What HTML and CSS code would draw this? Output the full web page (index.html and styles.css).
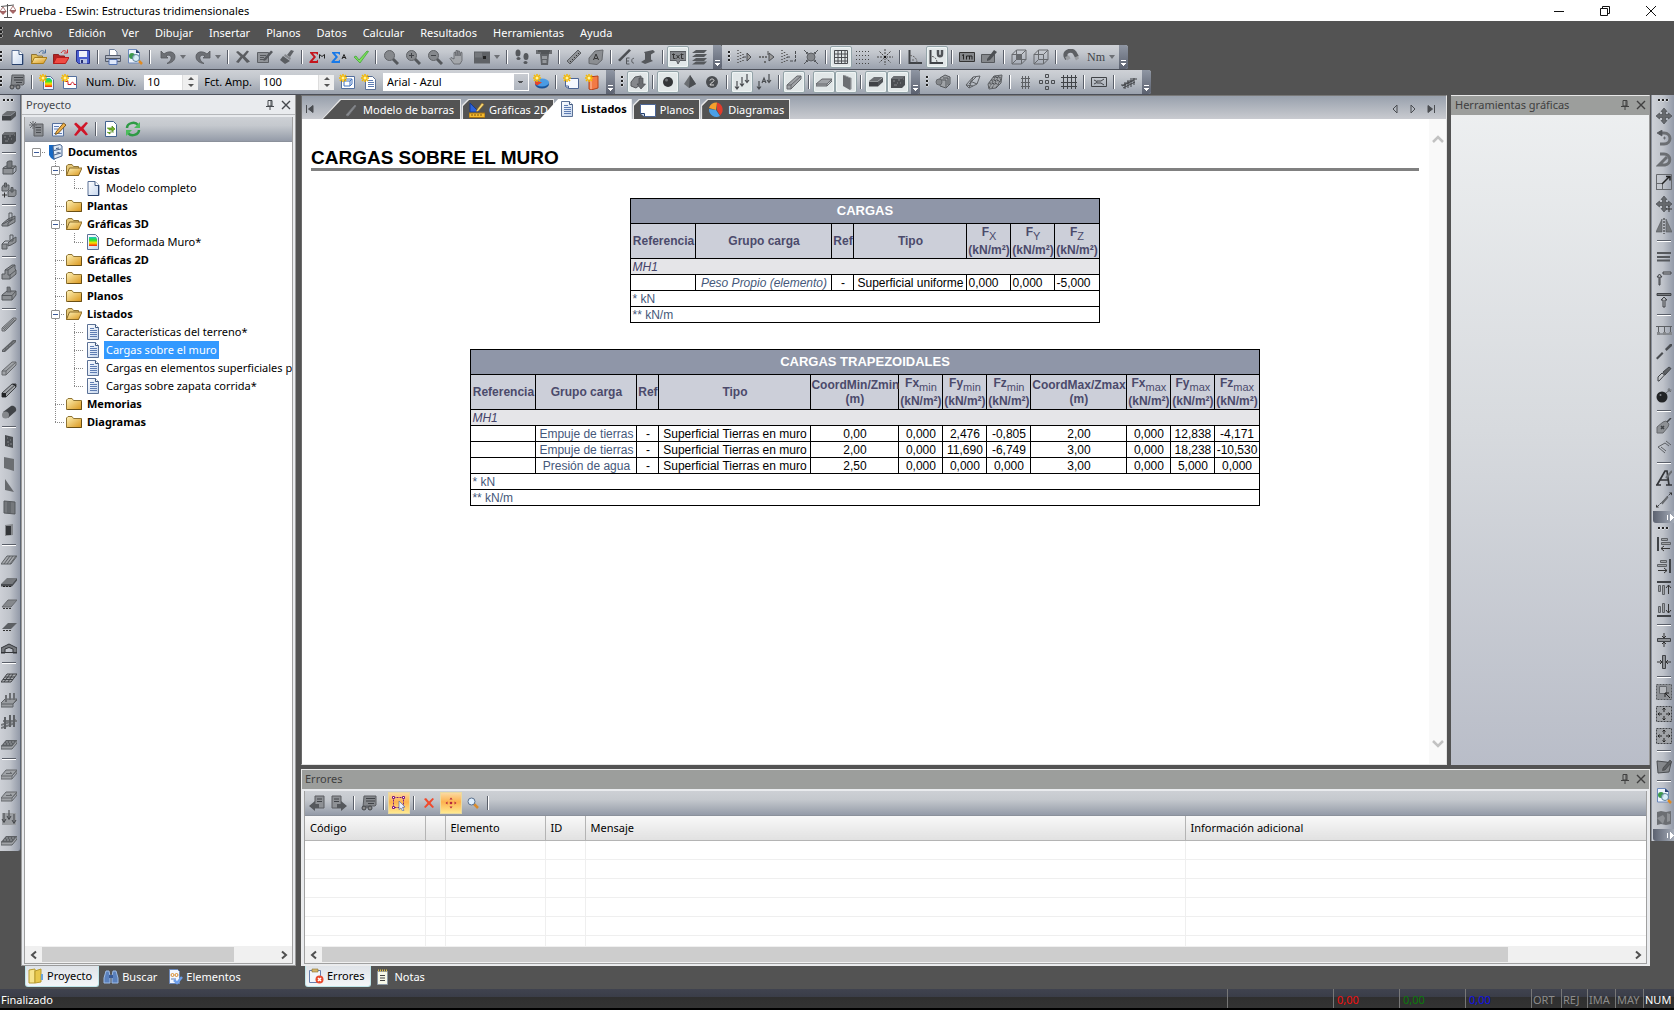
FILE: index.html
```html
<!DOCTYPE html>
<html lang="es">
<head>
<meta charset="utf-8">
<title>Prueba - ESwin: Estructuras tridimensionales</title>
<link rel="stylesheet" href="styles.css">
</head>
<body>
<svg class="sprite" aria-hidden="true">
  <defs>
    <linearGradient id="g-folder" x1="0" y1="0" x2="1" y2="1"><stop offset="0" stop-color="#fff3b8"/><stop offset="1" stop-color="#d9961c"/></linearGradient>
    <linearGradient id="g-page" x1="0" y1="0" x2="1" y2="1"><stop offset="0" stop-color="#fff"/><stop offset="1" stop-color="#c5d6ee"/></linearGradient>
    <linearGradient id="g-heat" x1="0" y1="0" x2="0" y2="1"><stop offset="0" stop-color="#19c8c0"/><stop offset=".35" stop-color="#2fe02f"/><stop offset=".65" stop-color="#ffe000"/><stop offset="1" stop-color="#f02010"/></linearGradient>
  </defs>
  <!-- documents and folders -->
  <symbol id="page" viewBox="0 0 16 16"><path d="M3 1.500h7l4 4v10H3z" fill="url(#g-page)" stroke="#5b7196"/><path d="M10 1.500v4h4" fill="#fff" stroke="#3f587f"/><path d="M13.500 5v10.500H3" fill="none" stroke="#27406b"/></symbol>
  <symbol id="textpage" viewBox="0 0 16 16"><path d="M2.500.500h8l3 3v12h-11z" fill="url(#g-page)" stroke="#5b7196"/><path d="M10.500.500v3h3" fill="#fff" stroke="#3f587f"/><path d="M5 4.500h4M5 6.500h7M5 8.500h7M5 10.500h7M5 12.500h7" stroke="#5f7db3"/></symbol>
  <symbol id="heatpage" viewBox="0 0 16 16"><path d="M2.500.500h8l3 3v12h-11z" fill="url(#g-page)" stroke="#5b7196"/><path d="M4 3h7l1 2v7H4z" fill="url(#g-heat)"/></symbol>
  <symbol id="folder" viewBox="0 0 16 16"><path d="M.500 13.500v-9.500l1.500-1.500h4l1.500 2h8v9z" fill="url(#g-folder)" stroke="#8f7434"/><path d="M1.500 13.500h14v-8" fill="none" stroke="#6b4f14"/></symbol>
  <symbol id="folderopen" viewBox="0 0 16 16"><path d="M.500 13.500v-9.500l1.500-1.500h4l1.500 2h5v9z" fill="#e6c97a" stroke="#8f7434"/><path d="M.500 13.500l3-7.500h12.500l-3.500 7.500z" fill="url(#g-folder)" stroke="#8a6a26"/></symbol>
  <symbol id="openfile" viewBox="0 0 16 16"><path d="M.500 14.500v-9h5l1 1.500h5v7.500z" fill="#e0bd58" stroke="#8f7434"/><path d="M.500 14.500l3-6h12.500l-3.500 6z" fill="url(#g-folder)" stroke="#a87d1a"/><path d="M8 4c2-3 4-3 6-.500M14.500.500v3.500h-3.500" fill="none" stroke="#4a6f9c"/></symbol>
  <symbol id="openred" viewBox="0 0 16 16"><path d="M.500 14.500v-9h5l1 1.500h5v7.500z" fill="#b52222" stroke="#8f2020"/><path d="M.500 14.500l3-6h12.500l-3.500 6z" fill="#ef4b43" stroke="#b81c1c"/><path d="M8 4c2-3 4-3 6-.500M14.500.500v3.500h-3.500" fill="none" stroke="#d02a2a"/></symbol>
  <symbol id="save" viewBox="0 0 16 16"><path d="M1.500 1.500h13v13h-11l-2-2z" fill="#4a5fd0" stroke="#262f8c"/><path d="M4 2h8v6H4z" fill="#eef1fa"/><path d="M5 10h7v4.500H5z" fill="#b9c4e4"/><path d="M6 11h2v3H6z" fill="#263075"/></symbol>
  <symbol id="print" viewBox="0 0 16 16"><path d="M4.500 6V.500h5l2.500 2.500v3" fill="#fff" stroke="#6f7f99"/><path d="M.500 6.500h15v6H.500z" fill="#b2b8c4" stroke="#565d6b"/><path d="M1 9.500h14" stroke="#4f5663"/><path d="M4 10.500h8v5H4z" fill="#dfe8fb" stroke="#5473b3"/></symbol>
  <symbol id="preview" viewBox="0 0 16 16"><path d="M1.500.500h8l3 3v10.500h-11z" fill="#eef4fd" stroke="#6c88ba"/><circle cx="5" cy="7" r="3" fill="#3c9a4c"/><path d="M9 .500v3.500h4z" fill="#24406e"/><circle cx="9" cy="9" r="3.500" fill="#d5ecf7" fill-opacity=".85" stroke="#5f8299"/><path d="M12 12l3 3" stroke="#e08a20" stroke-width="2.500"/></symbol>
  <symbol id="cabinet" viewBox="0 0 16 16"><path d="M2 1h5l2 1v12l-2 2-3-2-2-3z" fill="#1668c4"/><path d="M6 2l7-1.500 2 1.500v10l-8 3z" fill="#dfe9f5" stroke="#47648f"/><path d="M7 6.500l7-1.500M7 11l7-2" stroke="#47648f"/><path d="M9 4.500l3-.500M9.500 9l3-.500" stroke="#3f587f"/></symbol>
  <!-- editing -->
  <symbol id="undo" viewBox="0 0 16 16"><path d="M1 2v7h7L6 7c3-2 6 0 5 3-.500 2-2 3-4 4.500 5-.500 8-3 8-7C15 3 9 1 4 5z" fill="#6d7075" stroke="#55585d" stroke-width=".8"/></symbol>
  <symbol id="redo" viewBox="0 0 16 16"><path d="M15 2v7H8l2-2C7 5 4 7 5 10c.500 2 2 3 4 4.500-5-.500-8-3-8-7C1 3 7 1 12 5z" fill="#6d7075" stroke="#55585d" stroke-width=".8"/></symbol>
  <symbol id="cross" viewBox="0 0 16 16"><path d="M1 3l2-1 5 4 4-4.500 2 1-4 5 5 5-3 1.500-4.500-5-4 5-2.500-1 4.500-5.500z" fill="#5b5d61"/></symbol>
  <symbol id="redcross" viewBox="0 0 16 16"><path d="M1 3l2-1.500 5 4.500 5-5 2 1-4.500 5.500 4.500 6-2 1-5-5-5 5.500-2-1 4.500-6z" fill="#d01528"/></symbol>
  <symbol id="smallcross" viewBox="0 0 16 16"><path d="M3 4l2-1 3 3.500L11.500 3l1.500 1-3.500 4L13 12l-1.500 1L8 9.500 4.500 13 3 12l3.500-4z" fill="#f04a2c"/></symbol>
  <symbol id="edit" viewBox="0 0 16 16"><path d="M.500 3.500h11v10H.500z" fill="#909398" stroke="#5d6065"/><path d="M3 6.500h6M3 8.500h4M3 10.500h6" stroke="#55585c"/><path d="M7 9.500l7-8 2 1.500-7 8-2.500 1z" fill="#55585d"/></symbol>
  <symbol id="brush" viewBox="0 0 16 16"><path d="M12 1l3 1-4 6-3-2z" fill="#5f6266"/><path d="M6 5l6 4-1 2-6-4z" fill="#85888c"/><path d="M4 7l7 5-5 3-5-4z" fill="#5a5d61"/></symbol>
  <symbol id="sigmam" viewBox="0 0 16 16"><path d="M1 3h8v3l-2-1.500H4L7 8l-3.500 4H7.500L9 10.500V14H.500v-1.500L4.500 8 1 4z" fill="#c4141c"/><path d="M10.500 9.500V5.500l2.500 2 2.500-2v4" fill="none" stroke="#222"/></symbol>
  <symbol id="sigmaa" viewBox="0 0 16 16"><path d="M1 3h8v3l-2-1.500H4L7 8l-3.500 4H7.500L9 10.500V14H.500v-1.500L4.500 8 1 4z" fill="#1779e8"/><path d="M11 10l2-4.500 2 4.500M11.500 8.500h3" fill="none" stroke="#222"/></symbol>
  <symbol id="check" viewBox="0 0 16 16"><path d="M1 8l2-1 3 4 8-9 1.500.500L7 14z" fill="#7be05a" stroke="#3a9c30" stroke-width=".7"/></symbol>
  <symbol id="zoom" viewBox="0 0 16 16"><path d="M10 10l5 5" stroke="#55585c" stroke-width="3"/><circle cx="6.500" cy="6.500" r="5" fill="#86898d" stroke="#606367"/></symbol>
  <symbol id="zoomin" viewBox="0 0 16 16"><use href="#zoom"/><path d="M4 6.500h5M6.500 4v5" stroke="#404347"/></symbol>
  <symbol id="zoomout" viewBox="0 0 16 16"><use href="#zoom"/><path d="M4 6.500h5" stroke="#404347"/></symbol>
  <symbol id="hand" viewBox="0 0 16 16"><path d="M5 15l-4-5.500 1-1L5 10V3.500l1.500-.500.500 4V1.500h1.500l.500 5.500V2h1.500l.500 5 1-4 1 .500v8L11 15z" fill="#a4a7ab" stroke="#5d6064" stroke-width=".8"/></symbol>
  <symbol id="viewbox" viewBox="0 0 16 16"><path d="M0 2.500h16v12H0z" fill="#5f6266"/><path d="M1 3.500h7v5H1z" fill="#75787c"/><path d="M9 7h3v3H9z" fill="#222"/></symbol>
  <symbol id="feet" viewBox="0 0 16 16"><g fill="#55585c"><ellipse cx="4" cy="4" rx="2.500" ry="3.500"/><ellipse cx="4.500" cy="9.500" rx="2" ry="1.500"/><ellipse cx="12" cy="7.500" rx="2.500" ry="3.500"/><ellipse cx="11.500" cy="13.500" rx="2" ry="1.500"/></g></symbol>
  <symbol id="section" viewBox="0 0 16 16"><path d="M0 1h16v4H0z" fill="#6b6e72"/><path d="M2 2h12M5 4h8" stroke="#3a3c3f"/><path d="M4 5h9l-1 11H5z" fill="#5f6266"/><path d="M6 7h5v3H6zM6.500 11h4v3h-4z" fill="#96999d"/></symbol>
  <symbol id="ruler" viewBox="0 0 16 16"><path d="M1 12l11-11 3 3L4 15z" fill="#8e9195" stroke="#5a5d61"/><path d="M4 12l1 1M6 10l1 1M8 8l1 1M10 6l1 1M12 4l1 1" stroke="#333"/></symbol>
  <symbol id="tag" viewBox="0 0 16 16"><path d="M1 9l6-7 8-1-1 10-5 4.500-8-1z" fill="#8b8e92" stroke="#66696d"/><path d="M5.500 11L8 5l2.500 6M6.500 9.500h3" fill="none" stroke="#333"/></symbol>
  <symbol id="ec" viewBox="0 0 16 16"><path d="M0 11L11 0l2 1.500L2 12.500z" fill="#4c4f53"/><path d="M11.500 9H8.500v6h3M8.500 12h2.500M16 9.500c-3-1-3 5.500 0 4.500" fill="none" stroke="#55585c"/></symbol>
  <symbol id="ibeam" viewBox="0 0 16 16"><path d="M4 3l9-2 2 2-4 2.500v5L13 12l-8 3-4-2 4-2.500v-6z" fill="#55585c"/></symbol>
  <symbol id="txt" viewBox="0 0 16 16"><path d="M0 2.500h16v9H10L8 15l-1.500-3.500H0z" fill="#85888c" stroke="#5a5d61"/><path d="M3.500 4.500v5h2M2 5.500h3M6.500 6l3 3.500M9.500 6l-3 3.500M11.500 4.500v5h2M10.500 5.500h3" fill="none" stroke="#333"/></symbol>
  <symbol id="layers" viewBox="0 0 16 16"><path d="M4 1h11l-3 3H0zM4 5h11l-3 3H0zM4 9h11l-3 3H0zM4 12.500h11l-3 3H0z" fill="#55585c"/></symbol>
  <symbol id="selpts" viewBox="0 0 16 16"><path d="M1 1v14M3.500 3v11M6 5v7" stroke="#555" stroke-dasharray="1 2" stroke-width="1.500"/><path d="M6 8h3M10 4l4 4-4 4z" fill="#999" stroke="#4a4d51"/></symbol>
  <symbol id="selpts2" viewBox="0 0 16 16"><path d="M0 8h9M5 13h3" stroke="#555" stroke-dasharray="2 1" stroke-width="1.500"/><path d="M9 2v4" stroke="#555"/><path d="M10 4l5 4-5 4z" fill="#999" stroke="#4a4d51"/></symbol>
  <symbol id="selpts3" viewBox="0 0 16 16"><path d="M1 1v14M3.500 3v11M6 5v7" stroke="#555" stroke-dasharray="1 2" stroke-width="1.500"/><path d="M6 8h3M9 12h6M14.500 2v10" fill="none" stroke="#4a4d51" stroke-dasharray="3 1"/></symbol>
  <symbol id="focus" viewBox="0 0 16 16"><circle cx="8" cy="8" r="4" fill="#85888c" stroke="#5d6064"/><path d="M1 1l3 3M15 1l-3 3M1 15l3-3M15 15l-3-3M3 4.500h1.500V3M11.500 3v1.500H13M3 11.500h1.500V13M13 11.500h-1.500V13" stroke="#55585c" fill="none"/></symbol>
  <symbol id="grid" viewBox="0 0 16 16"><path d="M1.500 1.500h13v13h-13zM1.500 5h13M1.500 8.500h13M1.500 12h13M5 1.500v13M8.500 1.500v13M12 1.500v13" fill="none" stroke="#4a4d51"/></symbol>
  <symbol id="dots" viewBox="0 0 16 16"><path d="M1 2.500h14M1 6.500h14M1 10.500h14M1 14.500h14" stroke="#444" stroke-dasharray="1 2"/></symbol>
  <symbol id="sun" viewBox="0 0 16 16"><path d="M8 0v16M0 8h16M2.500 2.500l11 11M13.500 2.500l-11 11" stroke="#444" stroke-dasharray="2 1"/><circle cx="8" cy="8" r="2" fill="#a9adb3"/><path d="M7 7h2v2H7z" fill="#111"/></symbol>
  <symbol id="angle" viewBox="0 0 16 16"><path d="M2.500 1v13H15" fill="none" stroke="#404347" stroke-width="2"/><path d="M3 6.500c4 0 7 3 7 7M5 11h2" fill="none" stroke="#666" stroke-dasharray="2 1"/></symbol>
  <symbol id="angleu" viewBox="0 0 16 16"><path d="M1.500 1v13H14" fill="none" stroke="#404347" stroke-width="2"/><path d="M3 7.500c3 0 5 3 5 6" fill="none" stroke="#666" stroke-dasharray="2 1"/><path d="M9 1v4c0 3 4 3 4 0V1" fill="none" stroke="#505357" stroke-width="2.500"/></symbol>
  <symbol id="onem" viewBox="0 0 16 16"><path d="M.500 3.500h15v9H.500z" fill="#85888c" stroke="#333"/><path d="M3 6.500l1.500-1v5M7.500 10.500V7h5.500v3.500M10.500 7v3.500" fill="none" stroke="#222"/></symbol>
  <symbol id="measure" viewBox="0 0 16 16"><path d="M.500 5.500h13v8H.500z" fill="#85888c" stroke="#55585c"/><path d="M6 10l7-9 3 2-7 8-3 1z" fill="#4c4f53"/></symbol>
  <symbol id="cube" viewBox="0 0 16 16"><path d="M1 5.500h9.500V15H1zM5.500 1H15v9.500H5.500zM1 5.500L5.500 1M10.500 5.500L15 1M10.500 15l4.500-4.500M1 15l4.500-4.500" fill="none" stroke="#66696d"/></symbol>
  <symbol id="cubefull" viewBox="0 0 16 16"><path d="M5 5h6v6H5z" fill="#66696d"/><use href="#cube"/></symbol>
  <symbol id="magnet" viewBox="0 0 16 16"><path d="M4 10L2.500 7c-1-5 6-7 9-3.500L14 8" fill="none" stroke="#5d6064" stroke-width="4"/><path d="M2 8l4-1.500 1.500 3-3.500 2zM11.500 8.500L15 7l1 2.500-3 2z" fill="#9a9da1"/></symbol>
  <!-- results and documents bar -->
  <symbol id="calcres" viewBox="0 0 16 16"><path d="M3 1h12v9l-1 1H5l-3 1z" fill="#85888c" stroke="#5a5d61"/><path d="M5 3.500h9M5 6h9M7 8.500h6" stroke="#404347"/><circle cx="3" cy="13" r="2" fill="#888" stroke="#404347"/><circle cx="9" cy="13" r="2" fill="#888" stroke="#404347"/><path d="M5 12h2" stroke="#404347"/></symbol>
  <symbol id="spark" viewBox="0 0 16 16"><path d="M4 0v8M0 4h8M1 1l6 6M7 1L1 7" stroke="#f5b800" stroke-width="1.500"/><circle cx="4" cy="4" r="1.500" fill="#fff3a0"/></symbol>
  <symbol id="newheat" viewBox="0 0 16 16"><path d="M4.500 2.500h7l3 3v10h-10z" fill="#eef" stroke="#5b7196"/><path d="M6 4h5l2 2v7H6z" fill="url(#g-heat)"/><use href="#spark"/></symbol>
  <symbol id="newcurve" viewBox="0 0 16 16"><path d="M2.500 2.500h13v12h-13z" fill="#fff" stroke="#55709e"/><path d="M4 7.500h3v3h3c0-3 3-3 3 0h2" fill="none" stroke="#d0202a"/><use href="#spark"/></symbol>
  <symbol id="newview" viewBox="0 0 16 16"><path d="M2.500 2.500h13v12h-13z" fill="#fff" stroke="#55709e"/><path d="M5 7h6v5H5zM7 5h6v5M5 7l2-2M11 7l2-2M11 12l2-2" fill="none" stroke="#4373bd"/><use href="#spark"/></symbol>
  <symbol id="newlist" viewBox="0 0 16 16"><path d="M4.500 2.500h7l3 3v10h-10z" fill="#fff" stroke="#5b7196"/><path d="M7 6.500h5M7 8.500h6M7 10.500h6M7 12.500h6" stroke="#5f7db3"/><use href="#spark"/></symbol>
  <symbol id="newpie" viewBox="0 0 16 16"><ellipse cx="9" cy="10" rx="7" ry="4.500" fill="#17549c"/><ellipse cx="9" cy="8.500" rx="7" ry="4" fill="#4b9be3"/><path d="M9 8.500L3 6.500c-2 2-1 4 1 5z" fill="#e5442a"/><use href="#spark"/></symbol>
  <symbol id="newplan" viewBox="0 0 16 16"><path d="M2.500 4.500h13v10h-10l-3-2z" fill="#f5f8ff" stroke="#4c6595"/><path d="M2.500 12h3v2.500" fill="none" stroke="#4c6595"/><use href="#spark"/></symbol>
  <symbol id="newbook" viewBox="0 0 16 16"><path d="M4 3l9-1v12l-7 2-2-1z" fill="#f27a45" stroke="#b5431b"/><path d="M6 4v11" stroke="#ffc3a2"/><use href="#spark"/></symbol>
  <symbol id="loads3d" viewBox="0 0 16 16"><path d="M1 8l4-5 6-1v8l-5 4-5-2z" fill="#85888c" stroke="#55585c"/><path d="M9 4h4v6h2.500L11 15l-4-5h2z" fill="#6b6e72" stroke="#4a4d51" stroke-width=".7"/></symbol>
  <symbol id="ball" viewBox="0 0 16 16"><circle cx="8" cy="8" r="5" fill="#333538"/><circle cx="6.500" cy="6" r="1.500" fill="#707376"/></symbol>
  <symbol id="pyramid" viewBox="0 0 16 16"><path d="M8 1l6 9-7 4-5-4z" fill="#6b6e72"/><path d="M8 1l6 9-7 4z" fill="#4a4d51"/></symbol>
  <symbol id="two" viewBox="0 0 16 16"><circle cx="8" cy="8" r="6" fill="#4a4d51"/><path d="M6 6.500c0-2 4-2 4 0C10 8 6 9 6 11h4" fill="none" stroke="#ddd"/></symbol>
  <symbol id="loads" viewBox="0 0 16 16"><path d="M3 7v8M1 12.500l2 2.500 2-2.500M8 3v9M6 9.500l2 2.500 2-2.500M13 0v8M11 6l2 2.500L15 6" fill="none" stroke="#4a4d51" stroke-width="1.200"/></symbol>
  <symbol id="loadsa" viewBox="0 0 16 16"><path d="M3 7v8M1 12.500l2 2.500 2-2.500M13 0v8M11 6l2 2.500L15 6M6 9l2-5 2 5M7 7.500h2" fill="none" stroke="#4a4d51" stroke-width="1.200"/></symbol>
  <symbol id="solidrock" viewBox="0 0 16 16"><path d="M5 4l5-3 5 2v7l-4 4-6-2z" fill="#a0a3a7" stroke="#55585c"/><path d="M6 6h5v7M8 4h5v7" fill="none" stroke="#55585c"/><circle cx="4" cy="8" r="3" fill="#85888c" stroke="#66696d"/></symbol>
  <symbol id="mesh1" viewBox="0 0 16 16"><path d="M1 11l7-8 7-1-3 8-8 4zM5 7l7 3M8 3l-4 11M12 2L4 10M1 11l7 1" fill="none" stroke="#5d6064"/></symbol>
  <symbol id="mesh2" viewBox="0 0 16 16"><path d="M1 10l6-8 8-1-1 8-5 5-7 1z" fill="#a0a3a7" stroke="#5d6064"/><path d="M2 9l10 1M4 6l10 1M6 3l8 1M5 14l7-12M2 14L9 2M9 14l5-9" stroke="#4a4d51" stroke-dasharray="2 1"/></symbol>
  <symbol id="rebar1" viewBox="0 0 16 16"><path d="M5.500 2v13M8.500 2v13M11.500 2v13M4 4.500h9M4 8.500h9M4 12.500h9" stroke="#5d6064"/></symbol>
  <symbol id="rebar2" viewBox="0 0 16 16"><path d="M6.500.500h3v3h-3zM6.500 6.500h3v3h-3zM6.500 12.500h3v3h-3zM.500 6.500h3v3h-3zM12.500 6.500h3v3h-3z" fill="none" stroke="#4a4d51"/></symbol>
  <symbol id="rebar3" viewBox="0 0 16 16"><path d="M2.500 1v14M6.500 1v14M10.500 1v14M14.500 1v14M0 3.500h16M0 8.500h16M0 12.500h16" stroke="#404347"/></symbol>
  <symbol id="tensile" viewBox="0 0 16 16"><path d="M.500 3.500h15v9H.500zM3 6l3 1.500v1L3 10M6 7h4l3-2M6 9h4l3 2" fill="none" stroke="#404347"/></symbol>
  <symbol id="slope" viewBox="0 0 16 16"><path d="M1 12l12-6M2 14l12-6M4 9v6M7 7v7M10 6v7M13 4v7M0 11h5M3 9h6M6 7h6M9 5h7" stroke="#404347"/></symbol>
  <!-- structural elements -->
  <symbol id="slab" viewBox="0 0 16 16"><path d="M1 7l5-4h9l-5 4z" fill="#6b6e72"/><path d="M1 7.500h9v5H1z" fill="#404347"/><path d="M10 7.500l5-4v4.500l-5 4.500z" fill="#505357"/></symbol>
  <symbol id="block" viewBox="0 0 16 16"><path d="M1 5l3-3h11v9l-3 3H1z" fill="#4a4d51"/><path d="M1 5l3-3h11l-3 3z" fill="#6b6e72"/><path d="M3 7h2M8 6h2M4 11h3M10 9h1M13 5h1M7 9h1" stroke="#85888c"/></symbol>
  <symbol id="footing" viewBox="0 0 16 16"><path d="M2 8l3-2h10l-3 3v5H2z" fill="#8e9195" stroke="#55585c"/><path d="M2 8.500h10l3-2.500v5l-3 3" fill="none" stroke="#55585c"/><path d="M6 2l2-1h3v6l-2 1H6z" fill="#75787c" stroke="#55585c"/></symbol>
  <symbol id="footing2" viewBox="0 0 16 16"><path d="M1 5l1.500-2H8v4L6.500 9H1z" fill="#8e9195" stroke="#55585c"/><path d="M3.500 1h2v4h-2z" fill="#75787c" stroke="#55585c"/><path d="M7 10l1.500-2H15v4.500l-1.500 2H7z" fill="#8e9195" stroke="#55585c"/><path d="M10 5.500h2V10h-2z" fill="#75787c" stroke="#55585c"/><path d="M1 13h5M3.500 10.500v5" stroke="#333"/></symbol>
  <symbol id="footing3" viewBox="0 0 16 16"><path d="M1 12l6-5 7-3v6l-7 4H1z" fill="#8e9195" stroke="#55585c"/><path d="M8 1h3v7L8 9zM2 12l9-5M7 14v-3l7-5" fill="none" stroke="#55585c"/></symbol>
  <symbol id="footing4" viewBox="0 0 16 16"><path d="M1 10h5v5H1zM7 9l3-3 5-3v5l-5 3-3 1z" fill="#8e9195" stroke="#55585c"/><path d="M9 1h3v6H9zM1 10l3-3h4" fill="none" stroke="#55585c"/></symbol>
  <symbol id="stripfoot" viewBox="0 0 16 16"><path d="M1 10h3V6l7-5h3v4l1 1v4l-6 5H1z" fill="#8e9195" stroke="#55585c"/><path d="M7 6l7-5M7 6v5h2l6-5M9 11v4M4 6h3" fill="none" stroke="#55585c"/></symbol>
  <symbol id="pilecap" viewBox="0 0 16 16"><path d="M1 9l5-4h9v4l-4 5H1z" fill="#8e9195" stroke="#55585c"/><path d="M1 9.500h10L15 5M11 9.500V14" fill="none" stroke="#55585c"/><path d="M6 1h3l1 5H6z" fill="#75787c" stroke="#55585c" stroke-width=".7"/></symbol>
  <symbol id="barhatch" viewBox="0 0 16 16"><path d="M1 12L12 2h3v2L4 15H1z" fill="#a0a3a7" stroke="#66696d"/><path d="M2 13L13 3M3 14L14 4" stroke="#66696d"/></symbol>
  <symbol id="bardark" viewBox="0 0 16 16"><path d="M1 12L12 2h3v2L4 14H1z" fill="#5d6064"/><path d="M2 13L14 3" stroke="#85888c" stroke-dasharray="3 1"/></symbol>
  <symbol id="barlight" viewBox="0 0 16 16"><path d="M1 11L11 2h4v3L5 15H1z" fill="#a0a3a7" stroke="#66696d"/><path d="M1 11h4v4M5 11L15 2" fill="none" stroke="#66696d"/></symbol>
  <symbol id="barend" viewBox="0 0 16 16"><path d="M1 11L11 2h4v3L5 15H1z" fill="#a0a3a7" stroke="#404347"/><path d="M1 11h4v4H1zM11 2h4v3z" fill="#222426"/><path d="M5 11L15 2" stroke="#404347"/></symbol>
  <symbol id="cylinder" viewBox="0 0 16 16"><path d="M2 8l8-6c3-1 6 2 5 5l-8 7z" fill="#404347"/><circle cx="4.500" cy="11" r="3.500" fill="#85888c"/></symbol>
  <symbol id="wallrock" viewBox="0 0 16 16"><path d="M4 1l8 2v11l-8-2z" fill="#4a4d51"/><path d="M6 4h1M9 6h1M6 8h2M9 10h2M7 11h1" stroke="#85888c"/></symbol>
  <symbol id="wall" viewBox="0 0 16 16"><path d="M3 1l10 2v12L3 12z" fill="#6b6e72"/></symbol>
  <symbol id="wallthin" viewBox="0 0 16 16"><path d="M5 1l7 3v12l-7-4z" fill="#6b6e72"/><path d="M5 1h1.500l7 3v11l-1.500 1V4z" fill="#85888c"/></symbol>
  <symbol id="tri" viewBox="0 0 16 16"><path d="M4 1l9 13-9-2z" fill="#66696d"/></symbol>
  <symbol id="panels" viewBox="0 0 16 16"><path d="M3 1l11 1v12L3 13z" fill="#75787c" stroke="#55585c"/><path d="M7 2v11M9 2v11" stroke="#55585c"/></symbol>
  <symbol id="opening" viewBox="0 0 16 16"><path d="M4 3l8-1v11l-8 1z" fill="#85888c"/><path d="M5 4h5v9H5z" fill="#333538"/></symbol>
  <symbol id="deckhatch" viewBox="0 0 16 16"><path d="M0 12L6 4h10l-6 8z" fill="#a6a9ad" stroke="#5d6064"/><path d="M3 12l6-8M6 12l6-8M9 12l6-8" stroke="#5d6064"/></symbol>
  <symbol id="deckdark" viewBox="0 0 16 16"><path d="M0 10L6 4h10l-5 6z" fill="#75787c"/><path d="M0 10h11l5-6v2.500l-5 6H0z" fill="#4a4d51"/><path d="M2 12.500h9" stroke="#222" stroke-dasharray="2 1"/></symbol>
  <symbol id="decklight" viewBox="0 0 16 16"><path d="M1 11l6-7h9l-6 7z" fill="#85888c" stroke="#66696d"/><path d="M2 12.500h9" stroke="#333" stroke-dasharray="2 1"/></symbol>
  <symbol id="plate" viewBox="0 0 16 16"><path d="M0 10l6-5h10l-5 5v2H0zM11 12l5-5V5" fill="#a0a3a7" stroke="#66696d"/><path d="M0 10h11l5-5" fill="none" stroke="#66696d"/></symbol>
  <symbol id="deckthin" viewBox="0 0 16 16"><path d="M1 11l6-6h9l-6 6z" fill="#5d6064"/><path d="M2 12.500h9" stroke="#333" stroke-dasharray="2 1"/></symbol>
  <symbol id="roof" viewBox="0 0 16 16"><path d="M0 8l8-4 8 4v5h-4V9L8 7.500 4 9v4H0z" fill="#75787c" stroke="#333538"/><path d="M0 12.500h16" stroke="#333538"/></symbol>
  <symbol id="deckgrid" viewBox="0 0 16 16"><path d="M0 12L6 4h10l-6 8z" fill="#a6a9ad" stroke="#404347"/><path d="M2 9.500h10M4 7h10M3 12l6-8M7 12l5-8" stroke="#404347"/></symbol>
  <symbol id="raftcols" viewBox="0 0 16 16"><path d="M0 11l4-4h12l-4 5v3H0z" fill="#9a9da1" stroke="#5d6064"/><path d="M0 12h12l4-4" fill="none" stroke="#5d6064"/><path d="M4 3h2v7H4zM8 1h2v7H8zM12 1h2v7h-2z" fill="#6b6e72"/></symbol>
  <symbol id="beamcols" viewBox="0 0 16 16"><path d="M0 11l15-5M2 7h14M0 14l14-5" stroke="#75787c" stroke-width="2"/><path d="M3 3h2v12H3zM8 1h2v12H8zM12 1h2v12h-2z" fill="#5d6064"/></symbol>
  <symbol id="raftgrid" viewBox="0 0 16 16"><path d="M0 10l5-6h11l-5 6z" fill="#5d6064"/><path d="M0 10h11l5-6v3l-5 6H0z" fill="#a0a3a7" stroke="#5d6064"/><path d="M3 8h9M5 6h9" stroke="#9a9da1" stroke-dasharray="2 1"/></symbol>
  <symbol id="raft" viewBox="0 0 16 16"><path d="M0 10l5-6h11l-5 6v3H0zM11 13l5-6V4" fill="#a0a3a7" stroke="#66696d"/><path d="M0 10h11l5-6M5 7.500h6M9 6l2 1.500" fill="none" stroke="#66696d"/></symbol>
  <symbol id="settle" viewBox="0 0 16 16"><path d="M1 3h14v12H1z" fill="#9a9da1"/><path d="M3 3v9M1 9l2 3.500L5 9M8 0v9M6 6l2 3.500L10 6M13 4v9M11 10l2 3.500 2-3.500" fill="none" stroke="#404347"/></symbol>
  <!-- graphic tools -->
  <symbol id="move" viewBox="0 0 16 16"><path d="M8 0l3 3.500H9.500v3h3V5L16 8l-3.500 3V9.500h-3v3H11L8 16l-3-3.500h1.500v-3h-3V11L0 8l3.500-3v1.500h3v-3H5z" fill="#66696d" stroke="#404347" stroke-width=".6"/></symbol>
  <symbol id="rotate" viewBox="0 0 16 16"><path d="M3 3h5c8 0 8 11 0 11H4" fill="none" stroke="#6b6e72" stroke-width="3"/><path d="M6 0v6L1 3zM7 8h3M8.500 6.500v3" fill="#55585c" stroke="#55585c" stroke-width=".7"/></symbol>
  <symbol id="rotate3d" viewBox="0 0 16 16"><path d="M4 2h4c7 0 8 10 1 11H3l8-8" fill="none" stroke="#6b6e72" stroke-width="3"/></symbol>
  <symbol id="scale" viewBox="0 0 16 16"><path d="M.500.500h15v15H.500zM.500 9.500h6v6h-6z" fill="none" stroke="#66696d"/><path d="M6 10l7-7M10 2.500h4v4" fill="none" stroke="#222" stroke-width="1.500"/></symbol>
  <symbol id="movecopy" viewBox="0 0 16 16"><use href="#move"/><path d="M13 10v6M10 13h6" stroke="#333"/></symbol>
  <symbol id="mirror" viewBox="0 0 16 16"><path d="M6 1v13H0zM10 1v13h6z" fill="#75787c" stroke="#55585c" stroke-width=".6"/><path d="M8 0v16" stroke="#222" stroke-dasharray="2 1"/></symbol>
  <symbol id="offset" viewBox="0 0 16 16"><path d="M1 5h14M1 9h13M1 12.500h13" stroke="#55585c" stroke-width="2"/></symbol>
  <symbol id="fillet" viewBox="0 0 16 16"><path d="M3 15V7H1l2.500-3L6 7H4v8zM15 2H7v2h8z" fill="#b5b8bc" stroke="#404347"/></symbol>
  <symbol id="extend" viewBox="0 0 16 16"><path d="M1 1.500h14v2H1z" fill="#75787c" stroke="#404347"/><path d="M7 15V8H5l3-3 3 3H9v7z" fill="#b5b8bc" stroke="#404347"/></symbol>
  <symbol id="divide" viewBox="0 0 16 16"><path d="M0 4.500h16M2.500 4v7M8.500 4v7M14.500 4v7M3 12h12" stroke="#5d6064"/><path d="M1 10h3v3H1zM7 10h3v3H7zM13 10h3v3h-3z" fill="#85888c"/></symbol>
  <symbol id="split" viewBox="0 0 16 16"><path d="M0 14l6-6 1.500 1.500-6 6zM9 5l5-5h2v2l-5.500 5z" fill="#4a4d51"/></symbol>
  <symbol id="knife" viewBox="0 0 16 16"><path d="M7 6l6-5 2 1.500L9 9z" fill="#5d6064" stroke="#404347"/><path d="M6 7l2.500 2L3 15H2v-4z" fill="#c5c8cc" stroke="#404347"/></symbol>
  <symbol id="bomb" viewBox="0 0 16 16"><circle cx="6" cy="9" r="5.500" fill="#222426"/><circle cx="4.500" cy="7" r="1" fill="#85888c"/><path d="M10 5l3-2.500M13 0v4M11.500 2h4M13 2l2 2" stroke="#6b6e72"/></symbol>
  <symbol id="label" viewBox="0 0 16 16"><path d="M1 9l6-5 3-1 3 3-1 3-5 6H1z" fill="#8e9195" stroke="#66696d"/><path d="M11 4l4-4M5 11l3-3M5 8l3 3" stroke="#404347" stroke-width="1.500"/></symbol>
  <symbol id="angledim" viewBox="0 0 16 16"><path d="M9 3L2 7l7 6M9 3l4 3M10 1l5 4M5 7l5 4" fill="none" stroke="#5d6064"/></symbol>
  <symbol id="text" viewBox="0 0 16 16"><path d="M1 15L9 1h2l2 14M4 10h8M0 15h5M10 15h6" fill="none" stroke="#333538" stroke-width="1.700"/><path d="M10 8l6-7" stroke="#6b6e72" stroke-width="2"/></symbol>
  <symbol id="dimline" viewBox="0 0 16 16"><path d="M2 14L14 2" stroke="#404347" stroke-dasharray="2 1"/><path d="M5 11l6-7 1.500 1.500-6 7z" fill="#66696d"/><path d="M0 15.500v-3l3 3zM16 .500v3l-3-3z" fill="#333"/></symbol>
  <symbol id="alignl" viewBox="0 0 16 16"><path d="M1 1h2v14H1z" fill="#404347"/><path d="M5.500 2.500h6v2h-6zM5.500 6.500h9v2h-9z" fill="#a0a3a7" stroke="#5d6064"/><path d="M5 12.500h9M8 10l-3 2.500L8 15" fill="none" stroke="#333"/></symbol>
  <symbol id="alignr" viewBox="0 0 16 16"><path d="M13 1h2v14h-2z" fill="#404347"/><path d="M4.500 2.500h6v2h-6zM1.500 6.500h9v2h-9z" fill="#a0a3a7" stroke="#5d6064"/><path d="M2 12.500h9M8 10l3 2.500L8 15" fill="none" stroke="#333"/></symbol>
  <symbol id="alignt" viewBox="0 0 16 16"><path d="M1 1h14v2H1z" fill="#404347"/><path d="M2.500 5.500h2v6h-2zM6.500 5.500h2v9h-2z" fill="#a0a3a7" stroke="#5d6064"/><path d="M12.500 14V5M10 8l2.500-3L15 8" fill="none" stroke="#333"/></symbol>
  <symbol id="alignb" viewBox="0 0 16 16"><path d="M1 13h14v2H1z" fill="#404347"/><path d="M2.500 4.500h2v6h-2zM6.500 1.500h2v9h-2z" fill="#a0a3a7" stroke="#5d6064"/><path d="M12.500 2v9M10 8l2.500 3L15 8" fill="none" stroke="#333"/></symbol>
  <symbol id="centerh" viewBox="0 0 16 16"><path d="M1.500 6.500h13v3h-13z" fill="#8e9195" stroke="#404347"/><path d="M8 1v5M6 4l2 2 2-2M8 15v-5M6 12l2-2 2 2" fill="none" stroke="#333"/></symbol>
  <symbol id="centerv" viewBox="0 0 16 16"><path d="M6.500 1.500h3v13h-3z" fill="#8e9195" stroke="#404347"/><path d="M1 8h5M4 6l2 2-2 2M15 8h-5M12 6l-2 2 2 2" fill="none" stroke="#333"/></symbol>
  <symbol id="zoomwin" viewBox="0 0 16 16"><path d="M.500.500h15v15H.500z" fill="#8e9195" stroke="#55585c" stroke-dasharray="2 1"/><path d="M3.500 2.500h7v7h-7z" fill="#b5b8bc" stroke="#66696d"/><path d="M14 14L9 9M9 13V9h4" fill="none" stroke="#222"/></symbol>
  <symbol id="zoomall" viewBox="0 0 16 16"><path d="M.500.500h15v15H.500z" fill="#a0a3a7" stroke="#404347" stroke-dasharray="2 1"/><path d="M8 2v4M8 10v4M2 8h4M10 8h4M6.500 3.500L8 2l1.500 1.500M6.500 12.500L8 14l1.500-1.500M3.500 6.500L2 8l1.500 1.500M12.500 6.500L14 8l-1.500 1.500" fill="none" stroke="#222"/></symbol>
  <symbol id="polyedit" viewBox="0 0 16 16"><path d="M1 3l9 1 5 1-2 9-11 1z" fill="#85888c" stroke="#4a4d51"/><path d="M7 10l7-8 2 2-7 8-2.500.500z" fill="#5d6064" stroke="#333" stroke-width=".5"/></symbol>
  <symbol id="map" viewBox="0 0 16 16"><path d="M1 2l4-1 5 1 5-1v13l-5 1-5-1-4 1z" fill="#6b6e72"/><path d="M1 8l6-3 2 3-2 6zM11 3l3 1v7l-3 1z" fill="#8e9195"/></symbol>
  <!-- panels -->
  <symbol id="newgray" viewBox="0 0 16 16"><path d="M5 3h9v12H5z" fill="#8a8d91" stroke="#5a5d61"/><path d="M7 6.500h5M7 9h5M7 11.500h5" stroke="#4a4d51"/><path d="M4 0v8M0 4h8M1 1l6 6M7 1L1 7" stroke="#66696d"/></symbol>
  <symbol id="editpage" viewBox="0 0 16 16"><path d="M1.500 2.500h11v12.500h-11z" fill="#eef4ff" stroke="#55709e"/><path d="M3 5.500h5M3 8h4M3 12.500h8" stroke="#5f7db3"/><path d="M5 11l7.500-9 2.500 2-7.500 8-3 1.500z" fill="#eeb04a" stroke="#7d5a20"/></symbol>
  <symbol id="reload" viewBox="0 0 16 16"><path d="M2.500.500h8l3 3v12h-11z" fill="#fff" stroke="#44648f"/><path d="M4 7h5V5l3 3-3 2.500V9H6M11 11H7v2L4 11" fill="#73b32b" stroke="#4c8514" stroke-width=".7"/></symbol>
  <symbol id="refresh" viewBox="0 0 16 16"><path d="M2 7c0-5 8-7 11-3M14 9c0 5-8 7-11 3" fill="none" stroke="#2e9a45" stroke-width="2.500"/><path d="M15 1v6H9zM1 15V9h6z" fill="#4bbd5c"/></symbol>
  <symbol id="prevdoc" viewBox="0 0 16 16"><path d="M6 1h9v12H6z" fill="#8e9195" stroke="#5a5d61"/><path d="M8 4h5M8 6.500h5" stroke="#404347"/><path d="M0 11l6-5v3h4v4H6v3z" fill="#55585c"/></symbol>
  <symbol id="nextdoc" viewBox="0 0 16 16"><path d="M1 1h9v12H1z" fill="#8e9195" stroke="#5a5d61"/><path d="M3 4h5M3 6.500h5" stroke="#404347"/><path d="M16 11l-6-5v3H6v4h4v3z" fill="#55585c"/></symbol>
  <symbol id="selectbox" viewBox="0 0 16 16"><path d="M2.500 2.500h10v10h-10z" fill="none" stroke="#7a1a80" stroke-dasharray="2 1"/><path d="M1.500 1.500h2v2h-2zM11.500 1.500h2v2h-2zM1.500 11.500h2v2h-2z" fill="#fff" stroke="#7a1a80"/><path d="M8 6l6 6-2.500.300 1.500 3-1.500.700-1.500-3L8 14.500z" fill="#e8eefb" stroke="#5870a5" stroke-width=".7"/></symbol>
  <symbol id="center" viewBox="0 0 16 16"><g fill="#b5243c"><circle cx="8" cy="8" r="1.300"/><path d="M8 2.500l1.500 2h-3zM8 13.500l1.500-2h-3zM2.500 8l2-1.500v3zM13.500 8l-2-1.500v3z"/></g></symbol>
  <symbol id="finder" viewBox="0 0 16 16"><path d="M9 9l4 4" stroke="#d98a2a" stroke-width="2.500"/><circle cx="6.500" cy="6.500" r="3.500" fill="#dff0ff" stroke="#5a6f8c"/></symbol>
  <symbol id="gold" viewBox="0 0 16 16"><path d="M1 2l6-1v14H1z" fill="#f7e48d" stroke="#b79a2d"/><path d="M7 3l6-2v13l-6 1z" fill="#e8c84c" stroke="#b79a2d"/><path d="M13 6h2v6h-2" fill="#6aa4dd"/></symbol>
  <symbol id="binoc" viewBox="0 0 16 16"><path d="M3 2h3l1 5v7H1V9zM10 2h3l2 7v5H9V7z" fill="#5b81bd" stroke="#9dbbe6"/><path d="M6 6h4v3H6z" fill="#3a5a94"/></symbol>
  <symbol id="pagecheck" viewBox="0 0 16 16"><path d="M2.500.500h8l2 2v12h-10z" fill="#f2f6ff" stroke="#6c88ba"/><circle cx="5.500" cy="6" r="1.500" fill="none" stroke="#d98a2a"/><circle cx="9.500" cy="6" r="1.500" fill="none" stroke="#d98a2a"/><path d="M4 10h5" stroke="#5f7db3"/><path d="M7 11l3 3 5-6" fill="none" stroke="#6fa0ea" stroke-width="2.500"/></symbol>
  <symbol id="errclip" viewBox="0 0 16 16"><path d="M1.500 2.500h11v12h-11z" fill="#f3f6fb" stroke="#667fae"/><path d="M4 1h6v3H4z" fill="#d4b56a" stroke="#8c6f2c" stroke-width=".6"/><circle cx="11.500" cy="11.500" r="4" fill="#e8492e"/><path d="M10 10l3 3M13 10l-3 3" stroke="#fff" stroke-width="1.500"/></symbol>
  <symbol id="notes" viewBox="0 0 16 16"><path d="M2.500 2.500h10v13h-10z" fill="#f6f8e9" stroke="#8c99a6"/><path d="M3 1.500h10" stroke="#e2c14a" stroke-width="2" stroke-dasharray="1 1"/><path d="M5 6.500h5M5 9h5M5 11.500h5" stroke="#444"/></symbol>
  <symbol id="barline" viewBox="0 0 16 16"><path d="M3 13L12 3l1 1L5 14z" fill="#8a8d92" stroke="#77797d"/></symbol>
  <symbol id="draft" viewBox="0 0 16 16"><path d="M1 1v9h9z" fill="#2f63d8" stroke="#123a94"/><path d="M0 11h16v4.500H0z" fill="#f3b92e" stroke="#a06d10"/><path d="M3 12v2M6 12v2M9 12v2M12 12v2" stroke="#7a5310"/><path d="M7 9l6-8 2 1.500-6 7z" fill="#f7d774" stroke="#8c6420" stroke-width=".6"/></symbol>
  <symbol id="plan" viewBox="0 0 16 16"><path d="M.500 2.500h15v12h-11l-4-3z" fill="#fff" stroke="#4c6595"/><path d="M.500 11.500h4v3" fill="#c5d6ee" stroke="#24406e"/></symbol>
  <symbol id="pie" viewBox="0 0 16 16"><path d="M8 8L1 6A7.500 7.500 0 0 1 9 .500z" fill="#f6a02c"/><path d="M9 8V.500a7.500 7.500 0 0 1 3 13z" fill="#e03c2c"/><path d="M8 8l4 6a7.500 7.500 0 0 1-11-7z" fill="#4ba0e8"/></symbol>
  <symbol id="scales" viewBox="0 0 16 16"><path d="M1 3.500L14 2M7.500 1v13M4 14.500h8" stroke="#555" fill="none"/><path d="M0 8.500h6l-3 3zM10 7.500h6l-3 3zM3 4L0 8.500M3 4l3 4.500M13 3l-3 4.500M13 3l3 4.500" fill="#a66" stroke="#844" stroke-width=".7"/></symbol>
  <symbol id="pin" viewBox="0 0 10 10"><path d="M3 .500h4v5.500H3zM6 .500v5.500M1 6.500h8M5 6.500v3.500" fill="none" stroke="currentColor"/></symbol>
  <symbol id="close" viewBox="0 0 10 10"><path d="M1 1l8 8M9 1L1 9" stroke="currentColor" stroke-width="1.400"/></symbol>
  <symbol id="chevl" viewBox="0 0 10 10"><path d="M7 1.500L3 5l4 3.500" fill="none" stroke="#505050" stroke-width="2"/></symbol>
  <symbol id="chevr" viewBox="0 0 10 10"><path d="M3 1.500L7 5 3 8.500" fill="none" stroke="#505050" stroke-width="2"/></symbol>
</svg>

<header class="titlebar">
  <svg class="ico"><use href="#scales"/></svg>
  <h1>Prueba - ESwin: Estructuras tridimensionales</h1>
  <div class="winctl">
    <button aria-label="Minimizar"><svg viewBox="0 0 10 10"><path d="M0 5.500h10" stroke="#111"/></svg></button>
    <button aria-label="Restaurar"><svg viewBox="0 0 10 10"><path d="M.500 2.500h7v7h-7zM2.500 2.500v-2h7v7h-2" fill="none" stroke="#111"/></svg></button>
    <button aria-label="Cerrar"><svg viewBox="0 0 10 10"><path d="M0 0l10 10M10 0L0 10" stroke="#111"/></svg></button>
  </div>
</header>

<nav class="menubar" aria-label="Menú">
  <span class="grip light"></span>
  <button>Archivo</button><button>Edición</button><button>Ver</button><button>Dibujar</button><button>Insertar</button><button>Planos</button><button>Datos</button><button>Calcular</button><button>Resultados</button><button>Herramientas</button><button>Ayuda</button>
</nav>

<div class="toolrow">
  <div class="bar first" role="toolbar" aria-label="Estándar">
    <span class="grip"></span>
    <button class="tb" aria-label="Nuevo"><svg><use href="#page"/></svg></button>
    <button class="tb" aria-label="Abrir"><svg><use href="#openfile"/></svg></button>
    <button class="tb" aria-label="Abrir copia"><svg><use href="#openred"/></svg></button>
    <button class="tb" aria-label="Guardar"><svg><use href="#save"/></svg></button>
    <span class="sep"></span>
    <button class="tb" aria-label="Imprimir"><svg><use href="#print"/></svg></button>
    <button class="tb" aria-label="Vista preliminar"><svg><use href="#preview"/></svg></button>
    <span class="sep"></span>
    <button class="tb split" aria-label="Deshacer"><svg><use href="#undo"/></svg><i></i></button>
    <button class="tb split" aria-label="Rehacer"><svg><use href="#redo"/></svg><i></i></button>
    <span class="sep"></span>
    <button class="tb" aria-label="Borrar"><svg><use href="#cross"/></svg></button>
    <button class="tb" aria-label="Propiedades"><svg><use href="#edit"/></svg></button>
    <button class="tb" aria-label="Copiar formato"><svg><use href="#brush"/></svg></button>
    <span class="sep"></span>
    <button class="tb" aria-label="Calcular modelo"><svg><use href="#sigmam"/></svg></button>
    <button class="tb" aria-label="Calcular armado"><svg><use href="#sigmaa"/></svg></button>
    <button class="tb" aria-label="Comprobar"><svg><use href="#check"/></svg></button>
    <span class="sep"></span>
    <button class="tb" aria-label="Zoom"><svg><use href="#zoom"/></svg></button>
    <button class="tb" aria-label="Acercar"><svg><use href="#zoomin"/></svg></button>
    <button class="tb" aria-label="Alejar"><svg><use href="#zoomout"/></svg></button>
    <button class="tb" aria-label="Encuadre"><svg><use href="#hand"/></svg></button>
    <button class="tb split" aria-label="Vistas"><svg><use href="#viewbox"/></svg><i></i></button>
    <span class="sep"></span>
    <button class="tb" aria-label="Recorrido"><svg><use href="#feet"/></svg></button>
    <button class="tb" aria-label="Sección"><svg><use href="#section"/></svg></button>
    <span class="sep"></span>
    <button class="tb" aria-label="Medir"><svg><use href="#ruler"/></svg></button>
    <button class="tb" aria-label="Etiqueta"><svg><use href="#tag"/></svg></button>
    <span class="sep"></span>
    <button class="tb" aria-label="EC"><svg><use href="#ec"/></svg></button>
    <button class="tb" aria-label="Perfil"><svg><use href="#ibeam"/></svg></button>
    <span class="sep"></span>
    <button class="tb on" aria-label="Textos"><svg><use href="#txt"/></svg></button>
    <button class="tb" aria-label="Capas"><svg><use href="#layers"/></svg></button>
    <button class="chip" aria-label="Más opciones"></button>
  </div>
  <div class="bar" role="toolbar" aria-label="Selección">
    <span class="grip"></span>
    <button class="tb" aria-label="Plano de corte"><svg><use href="#selpts"/></svg></button>
    <button class="tb" aria-label="Recorte"><svg><use href="#selpts2"/></svg></button>
    <button class="tb" aria-label="Límite"><svg><use href="#selpts3"/></svg></button>
    <button class="tb" aria-label="Centrar"><svg><use href="#focus"/></svg></button>
    <span class="sep"></span>
    <button class="tb on" aria-label="Rejilla"><svg><use href="#grid"/></svg></button>
    <button class="tb" aria-label="Puntos"><svg><use href="#dots"/></svg></button>
    <button class="tb" aria-label="Polar"><svg><use href="#sun"/></svg></button>
    <span class="sep"></span>
    <button class="tb" aria-label="Ortogonal"><svg><use href="#angle"/></svg></button>
    <button class="tb on" aria-label="Imán ortogonal"><svg><use href="#angleu"/></svg></button>
    <span class="sep"></span>
    <button class="tb" aria-label="Unidad"><svg><use href="#onem"/></svg></button>
    <button class="tb" aria-label="Acotar"><svg><use href="#measure"/></svg></button>
    <span class="sep"></span>
    <button class="tb" aria-label="Cubo sólido"><svg><use href="#cubefull"/></svg></button>
    <button class="tb" aria-label="Cubo alámbrico"><svg><use href="#cube"/></svg></button>
    <span class="sep"></span>
    <button class="tb" aria-label="Imán"><svg><use href="#magnet"/></svg></button>
    <button class="tb split nm">Nm<i></i></button>
    <button class="chip" aria-label="Más opciones"></button>
  </div>
</div>

<div class="toolrow">
  <div class="bar first" role="toolbar" aria-label="Documentos">
    <span class="grip"></span>
    <button class="tb" aria-label="Resultados"><svg><use href="#calcres"/></svg></button>
    <span class="sep"></span>
    <button class="tb" aria-label="Nueva gráfica 3D"><svg><use href="#newheat"/></svg></button>
    <button class="tb" aria-label="Nueva gráfica 2D"><svg><use href="#newcurve"/></svg></button>
    <label class="lbl" for="numdiv">Num. Div.</label>
    <span class="spin"><input id="numdiv" value="10"><span><button aria-label="Más"></button><button class="dn" aria-label="Menos"></button></span></span>
    <label class="lbl" for="fctamp">Fct. Amp.</label>
    <span class="spin wide"><input id="fctamp" value="100"><span><button aria-label="Más"></button><button class="dn" aria-label="Menos"></button></span></span>
    <button class="tb" aria-label="Nueva vista"><svg><use href="#newview"/></svg></button>
    <button class="tb" aria-label="Nuevo listado"><svg><use href="#newlist"/></svg></button>
    <span class="combo"><select aria-label="Estilo"><option>Arial - Azul</option></select></span>
    <button class="tb" aria-label="Nuevo diagrama"><svg><use href="#newpie"/></svg></button>
    <span class="sep"></span>
    <button class="tb" aria-label="Nuevo plano"><svg><use href="#newplan"/></svg></button>
    <button class="tb" aria-label="Nueva memoria"><svg><use href="#newbook"/></svg></button>
    <button class="chip" aria-label="Más opciones"></button>
  </div>
  <div class="bar" role="toolbar" aria-label="Visibilidad">
    <span class="grip"></span>
    <button class="tb on" aria-label="Cargas"><svg><use href="#loads3d"/></svg></button>
    <span class="sep"></span>
    <button class="tb on" aria-label="Nudos"><svg><use href="#ball"/></svg></button>
    <button class="tb" aria-label="Apoyos"><svg><use href="#pyramid"/></svg></button>
    <button class="tb" aria-label="Numeración"><svg><use href="#two"/></svg></button>
    <span class="sep"></span>
    <button class="tb on" aria-label="Cargas lineales"><svg><use href="#loads"/></svg></button>
    <button class="tb" aria-label="Valores de carga"><svg><use href="#loadsa"/></svg></button>
    <span class="sep"></span>
    <button class="tb on" aria-label="Barras"><svg><use href="#barlight"/></svg></button>
    <span class="sep"></span>
    <button class="tb on" aria-label="Losas"><svg><use href="#plate"/></svg></button>
    <button class="tb on" aria-label="Muros"><svg><use href="#wallthin"/></svg></button>
    <span class="sep"></span>
    <button class="tb on" aria-label="Zapatas"><svg><use href="#slab"/></svg></button>
    <button class="tb on" aria-label="Terreno"><svg><use href="#block"/></svg></button>
    <button class="chip" aria-label="Más opciones"></button>
  </div>
  <div class="bar" role="toolbar" aria-label="Mallado">
    <span class="grip"></span>
    <button class="tb" aria-label="Sólidos"><svg><use href="#solidrock"/></svg></button>
    <span class="sep"></span>
    <button class="tb" aria-label="Malla simple"><svg><use href="#mesh1"/></svg></button>
    <button class="tb" aria-label="Malla fina"><svg><use href="#mesh2"/></svg></button>
    <span class="sep"></span>
    <button class="tb" aria-label="Armado vertical"><svg><use href="#rebar1"/></svg></button>
    <button class="tb" aria-label="Armado puntual"><svg><use href="#rebar2"/></svg></button>
    <button class="tb" aria-label="Armado en malla"><svg><use href="#rebar3"/></svg></button>
    <span class="sep"></span>
    <button class="tb" aria-label="Tirante"><svg><use href="#tensile"/></svg></button>
    <span class="sep"></span>
    <button class="tb" aria-label="Talud"><svg><use href="#slope"/></svg></button>
    <button class="chip" aria-label="Más opciones"></button>
  </div>
</div>

<main class="work">
  <div class="side left" role="toolbar" aria-label="Elementos" aria-orientation="vertical">
    <span class="grip"></span>
    <button class="tb" aria-label="Zapata"><svg><use href="#slab"/></svg></button>
    <button class="tb" aria-label="Terreno"><svg><use href="#block"/></svg></button>
    <span class="sep"></span>
    <button class="tb" aria-label="Zapata aislada"><svg><use href="#footing"/></svg></button>
    <button class="tb" aria-label="Zapata múltiple"><svg><use href="#footing2"/></svg></button>
    <span class="sep"></span>
    <button class="tb" aria-label="Zapata en esquina"><svg><use href="#footing3"/></svg></button>
    <button class="tb" aria-label="Zapata centrada"><svg><use href="#footing4"/></svg></button>
    <span class="sep"></span>
    <button class="tb" aria-label="Zapata corrida"><svg><use href="#stripfoot"/></svg></button>
    <button class="tb" aria-label="Encepado"><svg><use href="#pilecap"/></svg></button>
    <span class="sep"></span>
    <button class="tb" aria-label="Viga"><svg><use href="#barhatch"/></svg></button>
    <button class="tb" aria-label="Viga metálica"><svg><use href="#bardark"/></svg></button>
    <button class="tb" aria-label="Barra"><svg><use href="#barlight"/></svg></button>
    <button class="tb" aria-label="Barra rígida"><svg><use href="#barend"/></svg></button>
    <button class="tb" aria-label="Cilindro"><svg><use href="#cylinder"/></svg></button>
    <span class="sep"></span>
    <button class="tb" aria-label="Muro de piedra"><svg><use href="#wallrock"/></svg></button>
    <button class="tb" aria-label="Muro"><svg><use href="#wall"/></svg></button>
    <button class="tb" aria-label="Muro triangular"><svg><use href="#tri"/></svg></button>
    <button class="tb" aria-label="Pantalla"><svg><use href="#panels"/></svg></button>
    <button class="tb" aria-label="Hueco"><svg><use href="#opening"/></svg></button>
    <span class="sep"></span>
    <button class="tb" aria-label="Forjado"><svg><use href="#deckhatch"/></svg></button>
    <button class="tb" aria-label="Forjado macizo"><svg><use href="#deckdark"/></svg></button>
    <button class="tb" aria-label="Losa"><svg><use href="#decklight"/></svg></button>
    <button class="tb" aria-label="Losa delgada"><svg><use href="#deckthin"/></svg></button>
    <button class="tb" aria-label="Cubierta"><svg><use href="#roof"/></svg></button>
    <span class="sep"></span>
    <button class="tb" aria-label="Reticular"><svg><use href="#deckgrid"/></svg></button>
    <button class="tb" aria-label="Losa con pilares"><svg><use href="#raftcols"/></svg></button>
    <button class="tb" aria-label="Vigas con pilares"><svg><use href="#beamcols"/></svg></button>
    <button class="tb" aria-label="Losa armada"><svg><use href="#raftgrid"/></svg></button>
    <span class="sep"></span>
    <button class="tb" aria-label="Losa de cimentación"><svg><use href="#raft"/></svg></button>
    <button class="tb" aria-label="Hueco en losa"><svg><use href="#raft"/></svg></button>
    <button class="tb" aria-label="Carga superficial"><svg><use href="#settle"/></svg></button>
    <button class="tb" aria-label="Zona de losa"><svg><use href="#raftgrid"/></svg></button>
  </div>

  <section class="dock project" aria-label="Proyecto">
    <div class="panel">
      <div class="ptitle"><h2>Proyecto</h2><button aria-label="Fijar"><svg><use href="#pin"/></svg></button><button aria-label="Cerrar"><svg><use href="#close"/></svg></button></div>
      <div class="pbody">
        <div class="ptools">
          <button class="tb" aria-label="Nuevo documento"><svg><use href="#newgray"/></svg></button>
          <button class="tb" aria-label="Editar"><svg><use href="#editpage"/></svg></button>
          <button class="tb" aria-label="Eliminar"><svg><use href="#redcross"/></svg></button>
          <span class="sep"></span>
          <button class="tb" aria-label="Recalcular"><svg><use href="#reload"/></svg></button>
          <button class="tb" aria-label="Actualizar"><svg><use href="#refresh"/></svg></button>
        </div>
        <ul class="tree" role="tree">
          <li><span class="g h"><button aria-label="Contraer"></button></span><svg><use href="#cabinet"/></svg><b>Documentos</b></li>
          <li><span class="g"></span><span class="g v h"><button aria-label="Contraer"></button></span><svg><use href="#folderopen"/></svg><b>Vistas</b></li>
          <li><span class="g"></span><span class="g v"></span><span class="g l h"></span><svg><use href="#page"/></svg><span>Modelo completo</span></li>
          <li><span class="g"></span><span class="g v h"></span><svg><use href="#folder"/></svg><b>Plantas</b></li>
          <li><span class="g"></span><span class="g v h"><button aria-label="Contraer"></button></span><svg><use href="#folderopen"/></svg><b>Gráficas 3D</b></li>
          <li><span class="g"></span><span class="g v"></span><span class="g l h"></span><svg><use href="#heatpage"/></svg><span>Deformada Muro*</span></li>
          <li><span class="g"></span><span class="g v h"></span><svg><use href="#folder"/></svg><b>Gráficas 2D</b></li>
          <li><span class="g"></span><span class="g v h"></span><svg><use href="#folder"/></svg><b>Detalles</b></li>
          <li><span class="g"></span><span class="g v h"></span><svg><use href="#folder"/></svg><b>Planos</b></li>
          <li><span class="g"></span><span class="g v h"><button aria-label="Contraer"></button></span><svg><use href="#folderopen"/></svg><b>Listados</b></li>
          <li><span class="g"></span><span class="g v"></span><span class="g v h"></span><svg><use href="#textpage"/></svg><span>Características del terreno*</span></li>
          <li><span class="g"></span><span class="g v"></span><span class="g v h"></span><svg><use href="#textpage"/></svg><span class="sel">Cargas sobre el muro</span></li>
          <li><span class="g"></span><span class="g v"></span><span class="g v h"></span><svg><use href="#textpage"/></svg><span>Cargas en elementos superficiales planos</span></li>
          <li><span class="g"></span><span class="g v"></span><span class="g l h"></span><svg><use href="#textpage"/></svg><span>Cargas sobre zapata corrida*</span></li>
          <li><span class="g"></span><span class="g v h"></span><svg><use href="#folder"/></svg><b>Memorias</b></li>
          <li><span class="g"></span><span class="g l h"></span><svg><use href="#folder"/></svg><b>Diagramas</b></li>
        </ul>
        <div class="hscroll"><button aria-label="Izquierda"><svg><use href="#chevl"/></svg></button><span class="thumb"></span><span class="rest"></span><button aria-label="Derecha"><svg><use href="#chevr"/></svg></button></div>
      </div>
    </div>
    <div class="btabs">
      <button class="cur"><svg><use href="#gold"/></svg>Proyecto</button>
      <button><svg><use href="#binoc"/></svg>Buscar</button>
      <button><svg><use href="#pagecheck"/></svg>Elementos</button>
    </div>
  </section>

  <div class="center">
    <div class="upper">
      <section class="doc" aria-label="Documento">
        <div class="tabs">
          <button class="nav" aria-label="Primera"><svg viewBox="0 0 10 10"><path d="M1.500 1v8M8 1.500v7L3.500 5z" fill="#4a4d51" stroke="#4a4d51"/></svg></button>
          <button class="tab wideslant"><span><svg><use href="#barline"/></svg>Modelo de barras</span></button>
          <button class="tab graf"><span><svg><use href="#draft"/></svg>Gráficas 2D</span></button>
          <button class="tab active"><span><svg><use href="#textpage"/></svg>Listados</span></button>
          <button class="tab"><span><svg><use href="#plan"/></svg>Planos</span></button>
          <button class="tab"><span><svg><use href="#pie"/></svg>Diagramas</span></button>
          <span class="grow"></span>
          <button class="nav" aria-label="Anterior"><svg viewBox="0 0 10 10"><path d="M7 1v8L3 5z" fill="none" stroke="#4a4d51"/></svg></button>
          <button class="nav" aria-label="Siguiente"><svg viewBox="0 0 10 10"><path d="M3 1v8l4-4z" fill="none" stroke="#4a4d51"/></svg></button>
          <button class="nav" aria-label="Última"><svg viewBox="0 0 10 10"><path d="M8.500 1v8M2 1.500v7L6.500 5z" fill="#4a4d51" stroke="#4a4d51"/></svg></button>
        </div>
        <div class="page">
          <article class="sheet">
            <h2>CARGAS SOBRE EL MURO</h2>
            <table class="rep t1">
              <colgroup><col class="w65"><col class="w136"><col class="w22"><col class="w113"><col class="w44"><col class="w44"><col class="w44"></colgroup>
              <thead>
                <tr class="cap"><th colspan="7">CARGAS</th></tr>
                <tr class="hd"><th>Referencia</th><th>Grupo carga</th><th>Ref</th><th>Tipo</th><th>F<sub>X</sub><br>(kN/m²)</th><th>F<sub>Y</sub><br>(kN/m²)</th><th>F<sub>Z</sub><br>(kN/m²)</th></tr>
              </thead>
              <tbody>
                <tr class="grp"><td colspan="7">MH1</td></tr>
                <tr><td></td><td class="blue it">Peso Propio (elemento)</td><td>-</td><td>Superficial uniforme</td><td class="lf">0,000</td><td class="lf">0,000</td><td class="lf">-5,000</td></tr>
                <tr class="note"><td colspan="7">* kN</td></tr>
                <tr class="note"><td colspan="7">** kN/m</td></tr>
              </tbody>
            </table>
            <table class="rep t2">
              <colgroup><col class="w65"><col class="w101"><col class="w22"><col class="w152"><col class="w88"><col class="w44"><col class="w44"><col class="w44"><col class="w96"><col class="w44"><col class="w44"><col class="w44"></colgroup>
              <thead>
                <tr class="cap"><th colspan="12">CARGAS TRAPEZOIDALES</th></tr>
                <tr class="hd"><th>Referencia</th><th>Grupo carga</th><th>Ref</th><th>Tipo</th><th>CoordMin/Zmin<br>(m)</th><th>Fx<sub>min</sub><br>(kN/m²)</th><th>Fy<sub>min</sub><br>(kN/m²)</th><th>Fz<sub>min</sub><br>(kN/m²)</th><th>CoordMax/Zmax<br>(m)</th><th>Fx<sub>max</sub><br>(kN/m²)</th><th>Fy<sub>max</sub><br>(kN/m²)</th><th>Fz<sub>max</sub><br>(kN/m²)</th></tr>
              </thead>
              <tbody>
                <tr class="grp"><td colspan="12">MH1</td></tr>
                <tr><td></td><td class="blue">Empuje de tierras</td><td>-</td><td>Superficial Tierras en muro</td><td>0,00</td><td>0,000</td><td>2,476</td><td>-0,805</td><td>2,00</td><td>0,000</td><td>12,838</td><td>-4,171</td></tr>
                <tr><td></td><td class="blue">Empuje de tierras</td><td>-</td><td>Superficial Tierras en muro</td><td>2,00</td><td>0,000</td><td>11,690</td><td>-6,749</td><td>3,00</td><td>0,000</td><td>18,238</td><td>-10,530</td></tr>
                <tr><td></td><td class="blue">Presión de agua</td><td>-</td><td>Superficial Tierras en muro</td><td>2,50</td><td>0,000</td><td>0,000</td><td>0,000</td><td>3,00</td><td>0,000</td><td>5,000</td><td>0,000</td></tr>
                <tr class="note"><td colspan="12">* kN</td></tr>
                <tr class="note"><td colspan="12">** kN/m</td></tr>
              </tbody>
            </table>
          </article>
          <div class="vscroll"><button aria-label="Arriba"><svg viewBox="0 0 12 8"><path d="M1 7l5-5 5 5" fill="none" stroke="#c2c2c2" stroke-width="2.500"/></svg></button><button aria-label="Abajo"><svg viewBox="0 0 12 8"><path d="M1 1l5 5 5-5" fill="none" stroke="#c2c2c2" stroke-width="2.500"/></svg></button></div>
        </div>
      </section>
      <section class="gtools" aria-label="Herramientas gráficas">
        <div class="ptitle dim"><h2>Herramientas gráficas</h2><button aria-label="Fijar"><svg><use href="#pin"/></svg></button><button aria-label="Cerrar"><svg><use href="#close"/></svg></button></div>
      </section>
    </div>

    <section class="dock errors" aria-label="Errores">
      <div class="panel">
        <div class="ptitle dim"><h2>Errores</h2><button aria-label="Fijar"><svg><use href="#pin"/></svg></button><button aria-label="Cerrar"><svg><use href="#close"/></svg></button></div>
        <div class="pbody">
          <div class="ptools">
            <button class="tb" aria-label="Anterior"><svg><use href="#prevdoc"/></svg></button>
            <button class="tb" aria-label="Siguiente"><svg><use href="#nextdoc"/></svg></button>
            <span class="sep"></span>
            <button class="tb" aria-label="Resultados"><svg><use href="#calcres"/></svg></button>
            <span class="sep"></span>
            <button class="tb hot" aria-label="Seleccionar"><svg><use href="#selectbox"/></svg></button>
            <span class="sep"></span>
            <button class="tb" aria-label="Quitar"><svg><use href="#smallcross"/></svg></button>
            <button class="tb hot" aria-label="Centrar"><svg><use href="#center"/></svg></button>
            <button class="tb" aria-label="Buscar"><svg><use href="#finder"/></svg></button>
            <span class="sep"></span>
          </div>
          <div class="listwrap">
            <table class="list">
              <colgroup><col class="c120"><col class="c20"><col class="c100"><col class="c40"><col class="c600"><col></colgroup>
              <thead><tr><th>Código</th><th></th><th>Elemento</th><th>ID</th><th>Mensaje</th><th>Información adicional</th></tr></thead>
              <tbody>
                <tr><td></td><td></td><td></td><td></td><td></td><td></td></tr>
                <tr><td></td><td></td><td></td><td></td><td></td><td></td></tr>
                <tr><td></td><td></td><td></td><td></td><td></td><td></td></tr>
                <tr><td></td><td></td><td></td><td></td><td></td><td></td></tr>
                <tr><td></td><td></td><td></td><td></td><td></td><td></td></tr>
                <tr><td></td><td></td><td></td><td></td><td></td><td></td></tr>
              </tbody>
            </table>
          </div>
          <div class="hscroll"><button aria-label="Izquierda"><svg><use href="#chevl"/></svg></button><span class="thumb"></span><span class="rest"></span><button aria-label="Derecha"><svg><use href="#chevr"/></svg></button></div>
        </div>
      </div>
      <div class="btabs">
        <button class="cur"><svg><use href="#errclip"/></svg>Errores</button>
        <button><svg><use href="#notes"/></svg>Notas</button>
      </div>
    </section>
  </div>

  <div class="rightcol">
    <div class="side right" role="toolbar" aria-label="Edición gráfica" aria-orientation="vertical">
      <span class="grip"></span>
      <button class="tb" aria-label="Mover"><svg><use href="#move"/></svg></button>
      <button class="tb" aria-label="Girar"><svg><use href="#rotate"/></svg></button>
      <button class="tb" aria-label="Girar 3D"><svg><use href="#rotate3d"/></svg></button>
      <button class="tb" aria-label="Escalar"><svg><use href="#scale"/></svg></button>
      <button class="tb" aria-label="Copiar"><svg><use href="#movecopy"/></svg></button>
      <button class="tb" aria-label="Simetría"><svg><use href="#mirror"/></svg></button>
      <span class="sep"></span>
      <button class="tb" aria-label="Desfase"><svg><use href="#offset"/></svg></button>
      <button class="tb" aria-label="Unir"><svg><use href="#fillet"/></svg></button>
      <button class="tb" aria-label="Alargar"><svg><use href="#extend"/></svg></button>
      <span class="sep"></span>
      <button class="tb" aria-label="Dividir"><svg><use href="#divide"/></svg></button>
      <button class="tb" aria-label="Partir"><svg><use href="#split"/></svg></button>
      <button class="tb" aria-label="Cortar"><svg><use href="#knife"/></svg></button>
      <button class="tb" aria-label="Explotar"><svg><use href="#bomb"/></svg></button>
      <span class="sep"></span>
      <button class="tb" aria-label="Etiqueta"><svg><use href="#label"/></svg></button>
      <button class="tb" aria-label="Polilínea"><svg><use href="#angledim"/></svg></button>
      <span class="sep"></span>
      <button class="tb" aria-label="Texto"><svg><use href="#text"/></svg></button>
      <button class="tb" aria-label="Cota"><svg><use href="#dimline"/></svg></button>
      <button class="chip" aria-label="Más opciones"></button>
    </div>
    <div class="side right" role="toolbar" aria-label="Alineación" aria-orientation="vertical">
      <span class="grip"></span>
      <button class="tb" aria-label="Alinear izquierda"><svg><use href="#alignl"/></svg></button>
      <button class="tb" aria-label="Alinear derecha"><svg><use href="#alignr"/></svg></button>
      <button class="tb" aria-label="Alinear arriba"><svg><use href="#alignt"/></svg></button>
      <button class="tb" aria-label="Alinear abajo"><svg><use href="#alignb"/></svg></button>
      <span class="sep"></span>
      <button class="tb" aria-label="Centrar vertical"><svg><use href="#centerh"/></svg></button>
      <button class="tb" aria-label="Centrar horizontal"><svg><use href="#centerv"/></svg></button>
      <span class="sep"></span>
      <button class="tb" aria-label="Ventana"><svg><use href="#zoomwin"/></svg></button>
      <button class="tb" aria-label="Ajustar todo"><svg><use href="#zoomall"/></svg></button>
      <button class="tb" aria-label="Ajustar selección"><svg><use href="#zoomall"/></svg></button>
      <span class="sep"></span>
      <button class="tb" aria-label="Editar contorno"><svg><use href="#polyedit"/></svg></button>
      <span class="sep"></span>
      <button class="tb" aria-label="Vista web"><svg><use href="#preview"/></svg></button>
      <button class="tb" aria-label="Mapa"><svg><use href="#map"/></svg></button>
      <button class="chip" aria-label="Más opciones"></button>
    </div>
  </div>
</main>

<footer class="status">
  <span class="msg">Finalizado</span>
  <span class="s106"></span>
  <span class="s66 red">0,00</span><span class="s66 green">0,00</span><span class="s66 bluev">0,00</span>
  <span class="s30">ORT</span><span class="s26">REJ</span><span class="s28">IMA</span><span class="s28">MAY</span><span class="s31 lit">NUM</span>
</footer>
</body>
</html>
```
FILE: styles.css
```css
* { box-sizing: border-box; }

html, body { height: 100%; }

body {
  margin: 0;
  display: flex;
  flex-direction: column;
  background: #535353;
  color: #000;
  font: 11px/16px "Noto Sans", "Open Sans", sans-serif;
  overflow: hidden;
}

button, input, select { font: inherit; color: inherit; }
button { margin: 0; padding: 0; border: 0; background: none; }
h1, h2 { margin: 0; font-size: 11px; font-weight: 400; }
.sprite { position: absolute; width: 0; height: 0; }

/* title and menu */
.titlebar { flex: 0 0 21px; display: flex; align-items: center; background: #fff; }
.titlebar .ico { width: 16px; height: 16px; margin-right: 3px; }
.titlebar h1 { flex: 1; }
.winctl { display: flex; }
.winctl button { width: 46px; height: 16px; display: flex; justify-content: center; align-items: center; }
.winctl svg { width: 10px; height: 10px; }

.menubar { flex: 0 0 24px; display: flex; align-items: center; color: #fff; }
.menubar button { padding: 0 8px; }

/* horizontal toolbars */
.toolrow { flex: 0 0 25px; display: flex; align-items: stretch; }
.bar {
  display: flex;
  align-items: center;
  background: linear-gradient(#ced1d6, #c4c8ce 30%, #9aa1ad);
  border-bottom: 1px solid #4b4f59;
  border-radius: 0 3px 3px 0;
}
.grip {
  flex: none;
  width: 12px;
  height: 12px;
  background: radial-gradient(circle at 1px 1px, #222 1px, #fff 1px, transparent 2px) 6px 0 / 4px 4px repeat-y;
}
.bar.first .grip, .grip.light { width: 6px; background-position: 0 0; }
.tb {
  flex: none;
  width: 22px;
  height: 22px;
  display: flex;
  align-items: center;
  justify-content: center;
}
.tb svg { width: 16px; height: 16px; flex: none; }
.tb.on { border: 1px solid #93a3a8; border-radius: 2px; background: #e1e7e8; box-shadow: inset 0 0 1px 1px #f0f6f6; }
.tb.hot { border: 1px solid #e8d9a0; background: linear-gradient(#fbd9a0, #fdb24e 45%, #ffe98f); }
.tb.split { width: 35px; gap: 4px; padding-left: 3px; }
.tb.split i { border: 3px solid transparent; border-top: 4px solid #6d7075; border-bottom: 0; }
.tb.nm { font: 12px/16px "Liberation Serif", serif; color: #404347; }
.sep { flex: none; width: 8px; height: 14px; display: flex; justify-content: center; }
.sep::before { content: ""; width: 2px; background: linear-gradient(90deg, #5a5f69 50%, #fff 50%); }
.chip {
  align-self: stretch;
  width: 9px;
  margin-left: 2px;
  border-radius: 0 3px 3px 0;
  background:
    linear-gradient(#fff, #fff) 2px 15px / 5px 1px no-repeat,
    conic-gradient(from 315deg at 50% 100%, #fff 90deg, transparent 0) 2px 18px / 5px 3px no-repeat,
    linear-gradient(#8f96a3, #5c6270);
}
.lbl { padding: 0 8px 0 6px; }
.spin { display: flex; width: 54px; height: 15px; background: #fff; }
.spin.wide { width: 74px; margin-right: 2px; }
.spin input { flex: 1; min-width: 0; border: 0; padding: 0 3px; background: none; }
.spin > span { width: 16px; display: flex; flex-direction: column; }
.spin button { flex: 1; display: flex; align-items: center; justify-content: center; background: #efefef; border: 0 solid #ddd; border-left-width: 1px; }
.spin button::before { content: ""; border: 3px solid transparent; border-bottom: 3px solid #555; border-top: 0; }
.spin .dn::before { border-top: 3px solid #555; border-bottom: 0; }
.combo { display: flex; width: 146px; height: 18px; margin: 0 1px 0 3px; }
.combo select {
  flex: 1;
  border: 1px solid #fff;
  padding: 0 3px;
  appearance: none;
  background:
    conic-gradient(from 315deg at 50% 100%, transparent 360deg, transparent 0) no-repeat,
    linear-gradient(#505357, #505357) right 6px top 7px / 3px 2px no-repeat,
    linear-gradient(#505357, #505357) right 5px top 7px / 5px 1px no-repeat,
    linear-gradient(#c9ccd2, #aeb4be) right / 14px 16px no-repeat,
    #fff;
}

/* workspace */
.work { flex: 1; min-height: 0; display: flex; align-items: stretch; }

.side { display: flex; flex-direction: column; align-items: center; align-self: flex-start; background: linear-gradient(90deg, #cdd0d6, #bfc3ca 50%, #939aa8); }
.side .grip {
  width: 12px;
  height: 10px;
  background: radial-gradient(circle at 1px 1px, #222 1px, #fff 1px, transparent 2px) 0 4px / 4px 4px repeat-x;
}
.side .sep { width: 14px; height: 8px; align-items: center; }
.side .sep::before { width: 14px; height: 2px; background: linear-gradient(#5a5f69 50%, #fff 50%); }
.side.left { width: 21px; flex: none; padding-right: 2px; border-right: 1px solid #5c6470; border-radius: 0 0 3px 0; }
.side.right { width: 23px; padding-left: 1px; border-left: 1px solid #8b919c; }
.side .chip {
  width: 100%;
  height: 12px;
  margin: 0;
  border-radius: 0 0 0 3px;
  align-self: stretch;
  background:
    linear-gradient(#fff, #fff) 14px 4px / 1px 5px no-repeat,
    conic-gradient(from 225deg at 100% 50%, #fff 90deg, transparent 0) 17px 3px / 4px 7px no-repeat,
    linear-gradient(90deg, #5c6270, #a4abb7);
}
.rightcol { flex: none; display: flex; flex-direction: column; margin-left: 1px; }

/* docked panels */
.dock { display: flex; flex-direction: column; min-height: 0; }
.panel { flex: 1; min-height: 0; display: flex; flex-direction: column; background: #e9ebee; border: 1px solid #9b9b9b; border-top: 0; }
.ptitle { flex: 0 0 20px; display: flex; align-items: center; padding-left: 4px; background: #e9ebee; color: #45484d; border-bottom: 1px solid #b5b7ba; }
.ptitle h2 { flex: 1; }
.ptitle button { width: 16px; height: 16px; display: flex; align-items: center; justify-content: center; }
.ptitle svg { width: 10px; height: 10px; }
.ptitle.dim { background: #9c9e9c; border-color: #9c9e9c; color: #404040; }
.pbody { flex: 1; min-height: 0; display: flex; flex-direction: column; margin: 2px 2px 1px; border: 1px solid #a0a0a0; border-top: 0; background: #fff; }
.ptools { flex: 0 0 25px; display: flex; align-items: center; padding-left: 1px; background: linear-gradient(#cdd0d5, #c5c9ce 35%, #949ba8); border-bottom: 1px solid #8b919b; }
.hscroll { flex: 0 0 17px; display: flex; background: #f0f0f0; }
.hscroll button { width: 17px; display: flex; align-items: center; justify-content: center; }
.hscroll svg { width: 10px; height: 10px; }
.thumb { background: #cdcdcd; margin: 1px 0; }

.project { flex: 0 0 275px; min-width: 0; width: 275px; margin-right: 5px; }
.project .ptitle { padding-right: 1px; }
.project .thumb { flex: 193; }
.project .rest { flex: 41; }

.tree { flex: 1; min-height: 0; margin: 0; padding: 1px 0 0 2px; list-style: none; overflow: hidden; }
.tree li { height: 18px; display: flex; align-items: center; white-space: nowrap; }
.tree svg { flex: none; width: 16px; height: 16px; margin: 0 3px 0 1px; }
.tree li > :last-child { padding: 0 2px; line-height: 18px; }
.tree .sel { background: #3399ff; color: #fff; }
.g {
  --v: repeating-linear-gradient(#888 0 1px, transparent 1px 2px) no-repeat;
  --h: repeating-linear-gradient(90deg, #888 0 1px, transparent 1px 2px) no-repeat;
  flex: none;
  width: 19px;
  height: 18px;
  display: flex;
  align-items: center;
}
.g.h { background: var(--h) 9px 9px / 11px 1px; }
.g.v { background: var(--v) 9px 0 / 1px 18px; }
.g.v.h { background: var(--v) 9px 0 / 1px 18px, var(--h) 9px 9px / 11px 1px; }
.g.l.h { background: var(--v) 9px 0 / 1px 9px, var(--h) 9px 9px / 11px 1px; }
.g button {
  width: 9px;
  height: 9px;
  margin-left: 5px;
  border: 1px solid #919191;
  border-radius: 1px;
  background: linear-gradient(#3b5a9a, #3b5a9a) center / 5px 1px no-repeat, #fff;
}

.btabs { flex: 0 0 23px; display: flex; align-items: flex-start; gap: 2px; padding-left: 4px; color: #fff; }
.btabs button { height: 21px; display: flex; align-items: center; gap: 3px; padding: 0 6px 0 2px; }
.btabs svg { width: 16px; height: 16px; }
.btabs .cur { color: #000; background: linear-gradient(#dfe3e8, #f4f6f8); border-radius: 0 0 3px 3px; border: 1px solid #bfe6ea; border-top: 0; }

.center { flex: 1; min-width: 0; display: flex; flex-direction: column; }
.upper { flex: 1; min-height: 0; display: flex; }
.doc { flex: 1; min-width: 0; display: flex; flex-direction: column; background: #fff; border: 1px solid #e4e4e4; border-left: 1px solid #6a6a6a; border-top-color: #777; }
.tabs { flex: 0 0 23px; display: flex; align-items: flex-end; padding: 0 6px 0 2px; background: linear-gradient(#98a0ac, #c9cbd0); }
.nav { width: 18px; height: 20px; display: flex; align-items: center; justify-content: center; }
.tabs .nav:first-child { width: 12px; margin-right: 6px; }
.nav svg { width: 10px; height: 10px; }
.grow { flex: 1; }
.tab { height: 20px; margin-right: 1px; padding: 1px 1px 0 1px; background: #e8e8e8; clip-path: polygon(0 6px, 6px 0, 100% 0, 100% 100%, 0 100%); }
.tab span { height: 19px; display: flex; align-items: center; gap: 4px; padding: 0 5px 0 6px; background: #535353; color: #fff; clip-path: polygon(0 6px, 6px 0, 100% 0, 100% 100%, 0 100%); }
.tab svg { width: 16px; height: 16px; }
.tab.wideslant { clip-path: polygon(0 100%, 18px 0, 100% 0, 100% 100%); }
.tab.wideslant span { padding: 0 6px 0 20px; clip-path: polygon(0 100%, 18px 0, 100% 0, 100% 100%); }
.tab.graf { margin-right: -14px; }
.tab.active { padding: 0; background: #fff; clip-path: polygon(0 100%, 18px 0, 100% 0, 100% 100%); }
.tab.active span { height: 20px; gap: 6px; padding: 0 5px 0 19px; background: none; color: #000; font-weight: 700; clip-path: none; }

.page { flex: 1; min-height: 0; display: flex; }
.sheet { flex: 1; min-width: 0; padding: 28px 10px 0 9px; font-family: "Liberation Sans", Arial, sans-serif; }
.sheet h2 { font-size: 19px; line-height: 21px; font-weight: 700; border-bottom: 3px solid #808080; margin-bottom: 27px; }
.vscroll { flex: 0 0 17px; display: flex; flex-direction: column; justify-content: space-between; align-items: center; padding: 16px 0; background: #f9f9f9; }
.vscroll svg { display: block; width: 12px; height: 8px; }

/* report tables */
.rep { margin: 0 auto 26px; border-collapse: collapse; table-layout: fixed; font-size: 12px; line-height: 14px; }
.t1 { width: 469px; }
.t2 { width: 789px; }
.w22 { width: 22px; } .w44 { width: 44px; } .w65 { width: 65px; } .w88 { width: 88px; }
.w96 { width: 96px; } .w101 { width: 101px; } .w113 { width: 113px; } .w136 { width: 136px; } .w152 { width: 152px; }
.rep th, .rep td { padding: 0; border: 1px solid #000; text-align: center; white-space: nowrap; }
.rep td { height: 16px; padding-top: 1px; }
.rep td.lf, .grp td, .note td { text-align: left; padding-left: 1px; }
.rep .cap th { height: 25px; background: #8f96a8; color: #fff; font-size: 13px; }
.rep .hd th { height: 35px; background: #cccfd9; color: #4b4a6b; }
.hd sub { font-size: 11px; line-height: 14px; font-weight: 400; vertical-align: -4px; }
.grp td { background: #e5e5e8; color: #45446a; font-style: italic; }
.note td, .rep .blue { color: #45587a; }
.it { font-style: italic; }

/* right panel */
.gtools { flex: 0 0 199px; margin-left: 4px; border-top: 1px solid #e8e8e8; border-right: 1px solid #999; background: linear-gradient(#eef0f1, #d7dade 50%, #b9bdc8); }
.gtools .ptitle { height: 19px; }

/* error list */
.errors { margin-top: 4px; flex: 0 0 220px; }
.errors .panel { border-color: #ececec; border-top: 1px solid #ececec; }
.errors .ptitle { flex-basis: 19px; padding-left: 3px; }
.listwrap { flex: 1; min-height: 0; overflow: hidden; }
.list { width: 100%; border-collapse: collapse; table-layout: fixed; }
.c20 { width: 20px; } .c40 { width: 40px; } .c100 { width: 100px; } .c120 { width: 120px; } .c600 { width: 600px; }
.list th { height: 24px; padding: 0 0 0 5px; text-align: left; font-weight: 400; background: linear-gradient(#f8f8f8, #e1e1e1); border-bottom: 1px solid #b4b4b4; border-right: 1px solid #b4b4b4; }
.list td { height: 19px; padding: 0; border: 1px solid #efefef; border-left: 0; }
.list th:last-child, .list td:last-child { border-right: 0; }
.errors .thumb { flex: 1187; }
.errors .rest { flex: 121; }

/* status bar */
.status { flex: 0 0 21px; display: flex; background: linear-gradient(#40434f 0, #3a3d48 8px, #2f2f2f 8px, #333 19px, #000 19px); color: #8c8c8c; line-height: 16px; }
.status span { height: 19px; padding: 3px 0 0 3px; border-left: 1px solid #777; }
.status .msg { flex: 1; padding-left: 1px; border: 0; color: #fff; }
.s106 { width: 106px; } .s66 { width: 66px; } .s30 { width: 30px; } .s26 { width: 26px; } .s28 { width: 28px; } .s31 { width: 31px; }
.status .s30, .status .s26, .status .s28, .status .s31 { padding-left: 1px; }
.status .red { color: #f01010; } .status .green { color: #0b7a0b; } .status .bluev { color: #1010e8; }
.status .lit { color: #fff; }
```
